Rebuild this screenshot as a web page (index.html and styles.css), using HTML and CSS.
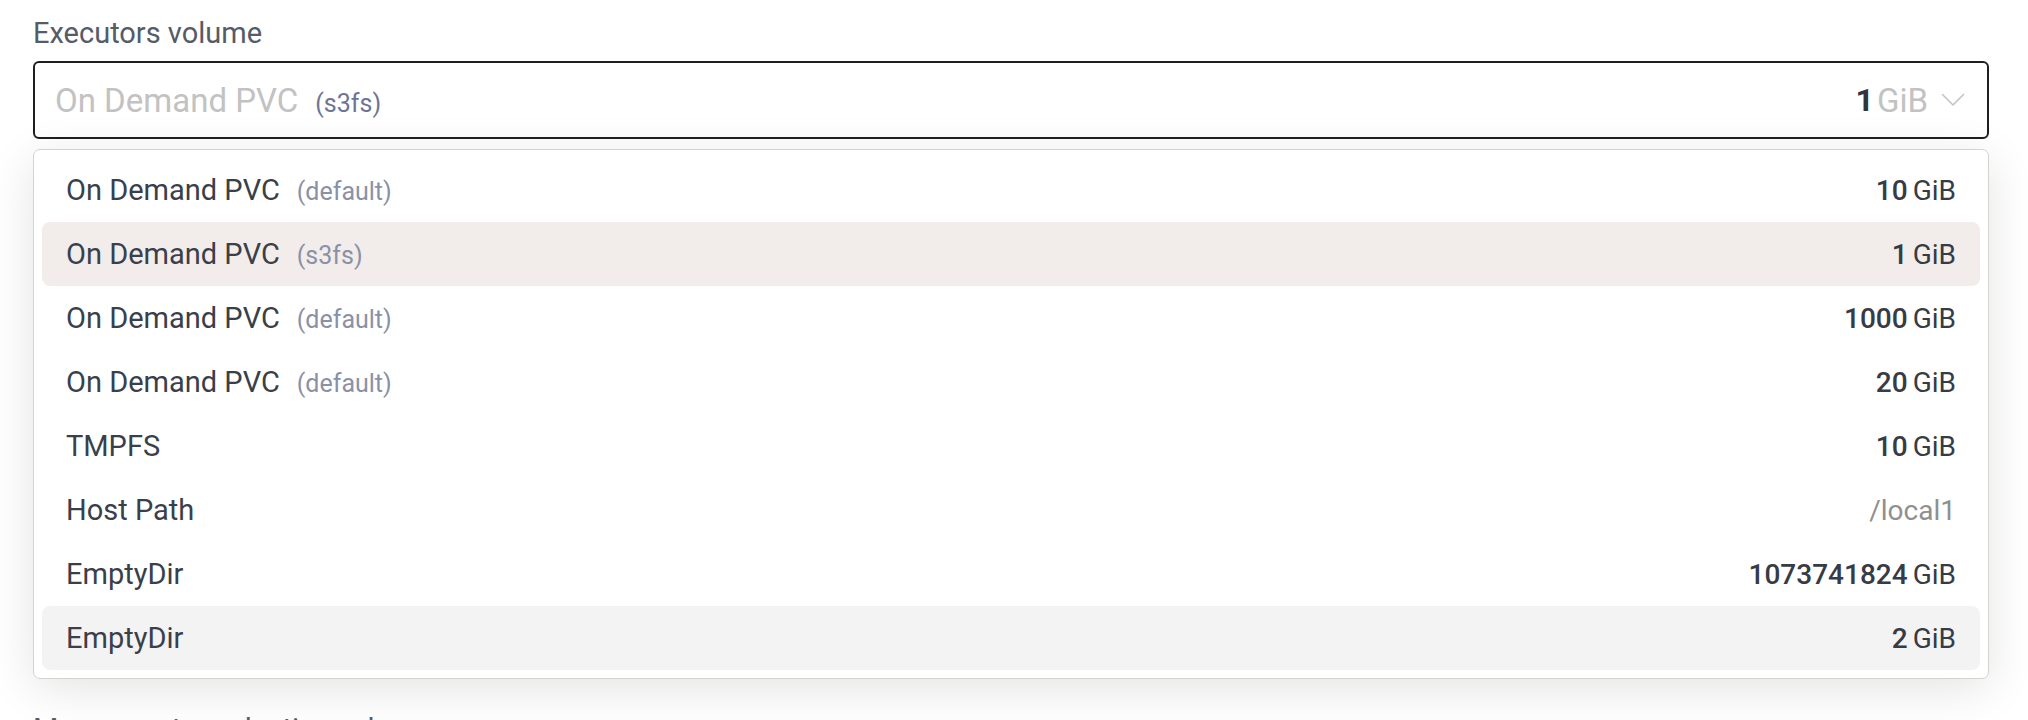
FILE: index.html
```html
<!DOCTYPE html>
<html lang="en">
<head>
<meta charset="utf-8">
<title>Executors volume</title>
<link rel="stylesheet" href="styles.css">
</head>
<body>
<div class="page">
  <div class="field">
    <div class="field-label">Executors volume</div>
    <div class="control">
      <div class="select">
        <span class="select-name">On Demand PVC<span class="tag tag-strong">(s3fs)</span></span>
        <span class="select-right">
          <span class="select-num">1</span><span class="select-unit">GiB</span>
          <svg class="chevron" width="24" height="14" viewBox="0 0 24 14"><path d="M1.5 1.5 L12 12 L22.5 1.5" fill="none" stroke="#c4c4c4" stroke-width="1.6" stroke-linecap="round" stroke-linejoin="round"/></svg>
        </span>
      </div>
      <ul class="listbox">
        <li class="option"><span class="opt-name">On Demand PVC<span class="tag">(default)</span></span><span class="opt-value"><span class="num">10</span><span class="unit">GiB</span></span></li>
        <li class="option selected"><span class="opt-name">On Demand PVC<span class="tag">(s3fs)</span></span><span class="opt-value"><span class="num">1</span><span class="unit">GiB</span></span></li>
        <li class="option"><span class="opt-name">On Demand PVC<span class="tag">(default)</span></span><span class="opt-value"><span class="num">1000</span><span class="unit">GiB</span></span></li>
        <li class="option"><span class="opt-name">On Demand PVC<span class="tag">(default)</span></span><span class="opt-value"><span class="num">20</span><span class="unit">GiB</span></span></li>
        <li class="option"><span class="opt-name">TMPFS</span><span class="opt-value"><span class="num">10</span><span class="unit">GiB</span></span></li>
        <li class="option"><span class="opt-name">Host Path</span><span class="opt-value"><span class="path">/local1</span></span></li>
        <li class="option"><span class="opt-name">EmptyDir</span><span class="opt-value"><span class="num">1073741824</span><span class="unit">GiB</span></span></li>
        <li class="option hovered"><span class="opt-name">EmptyDir</span><span class="opt-value"><span class="num">2</span><span class="unit">GiB</span></span></li>
      </ul>
    </div>
  </div>
  <div class="field">
    <div class="field-label">Max executors elastic scale</div>
  </div>
</div>
</body>
</html>
```

FILE: styles.css
```css
html, body {
  margin: 0;
  padding: 0;
  background: #ffffff;
  font-family: Roboto, "Liberation Sans", sans-serif;
  color: #3a3f4a;
  overflow: hidden;
}

.page {
  padding: 15px 39px 0 33px;
}

.field {
  display: flex;
  flex-direction: column;
}

.field-label {
  font-size: 29px;
  line-height: 36px;
  height: 36px;
  color: #555b67;
}

.control {
  margin-top: 10px;
  display: flex;
  flex-direction: column;
  gap: 10px;
  margin-bottom: 32px;
}

.select {
  box-sizing: border-box;
  height: 78px;
  border: 2px solid #1f1f1f;
  border-radius: 6px;
  padding: 0 22px 0 20px;
  display: flex;
  align-items: center;
  justify-content: space-between;
  background: #ffffff;
}

.select-name {
  font-size: 33px;
  color: #c2c2c2;
  display: flex;
  align-items: baseline;
}

.tag {
  font-size: 25px;
  color: #8a91a6;
  margin-left: 17px;
}

.tag-strong {
  color: #6d7592;
}

.select-right {
  display: flex;
  align-items: center;
}

.select-num {
  font-size: 32px;
  font-weight: 700;
  color: #2f343d;
}

.select-unit {
  font-size: 33px;
  color: #c2c2c2;
  margin-left: 3px;
}

.chevron {
  margin-left: 13px;
  display: block;
}

.listbox {
  list-style: none;
  margin: 0;
  padding: 8px;
  border: 1px solid #d4d4cf;
  border-radius: 7px;
  background: #ffffff;
  box-shadow: 0 10px 48px rgba(0, 0, 0, 0.11);
}

.option {
  height: 64px;
  box-sizing: border-box;
  padding: 0 24px;
  display: flex;
  align-items: center;
  justify-content: space-between;
  border-radius: 8px;
}

.option.selected {
  background: #f2edea;
}

.option.hovered {
  background: #f3f3f3;
}

.opt-name {
  font-size: 29px;
  color: #3a3f4a;
  display: flex;
  align-items: baseline;
}

.opt-value {
  display: flex;
  align-items: baseline;
  font-size: 28px;
  color: #363b45;
}

.num {
  font-weight: 500;
}

.unit {
  margin-left: 5px;
}

.path {
  color: #8f8f8f;
}
```
